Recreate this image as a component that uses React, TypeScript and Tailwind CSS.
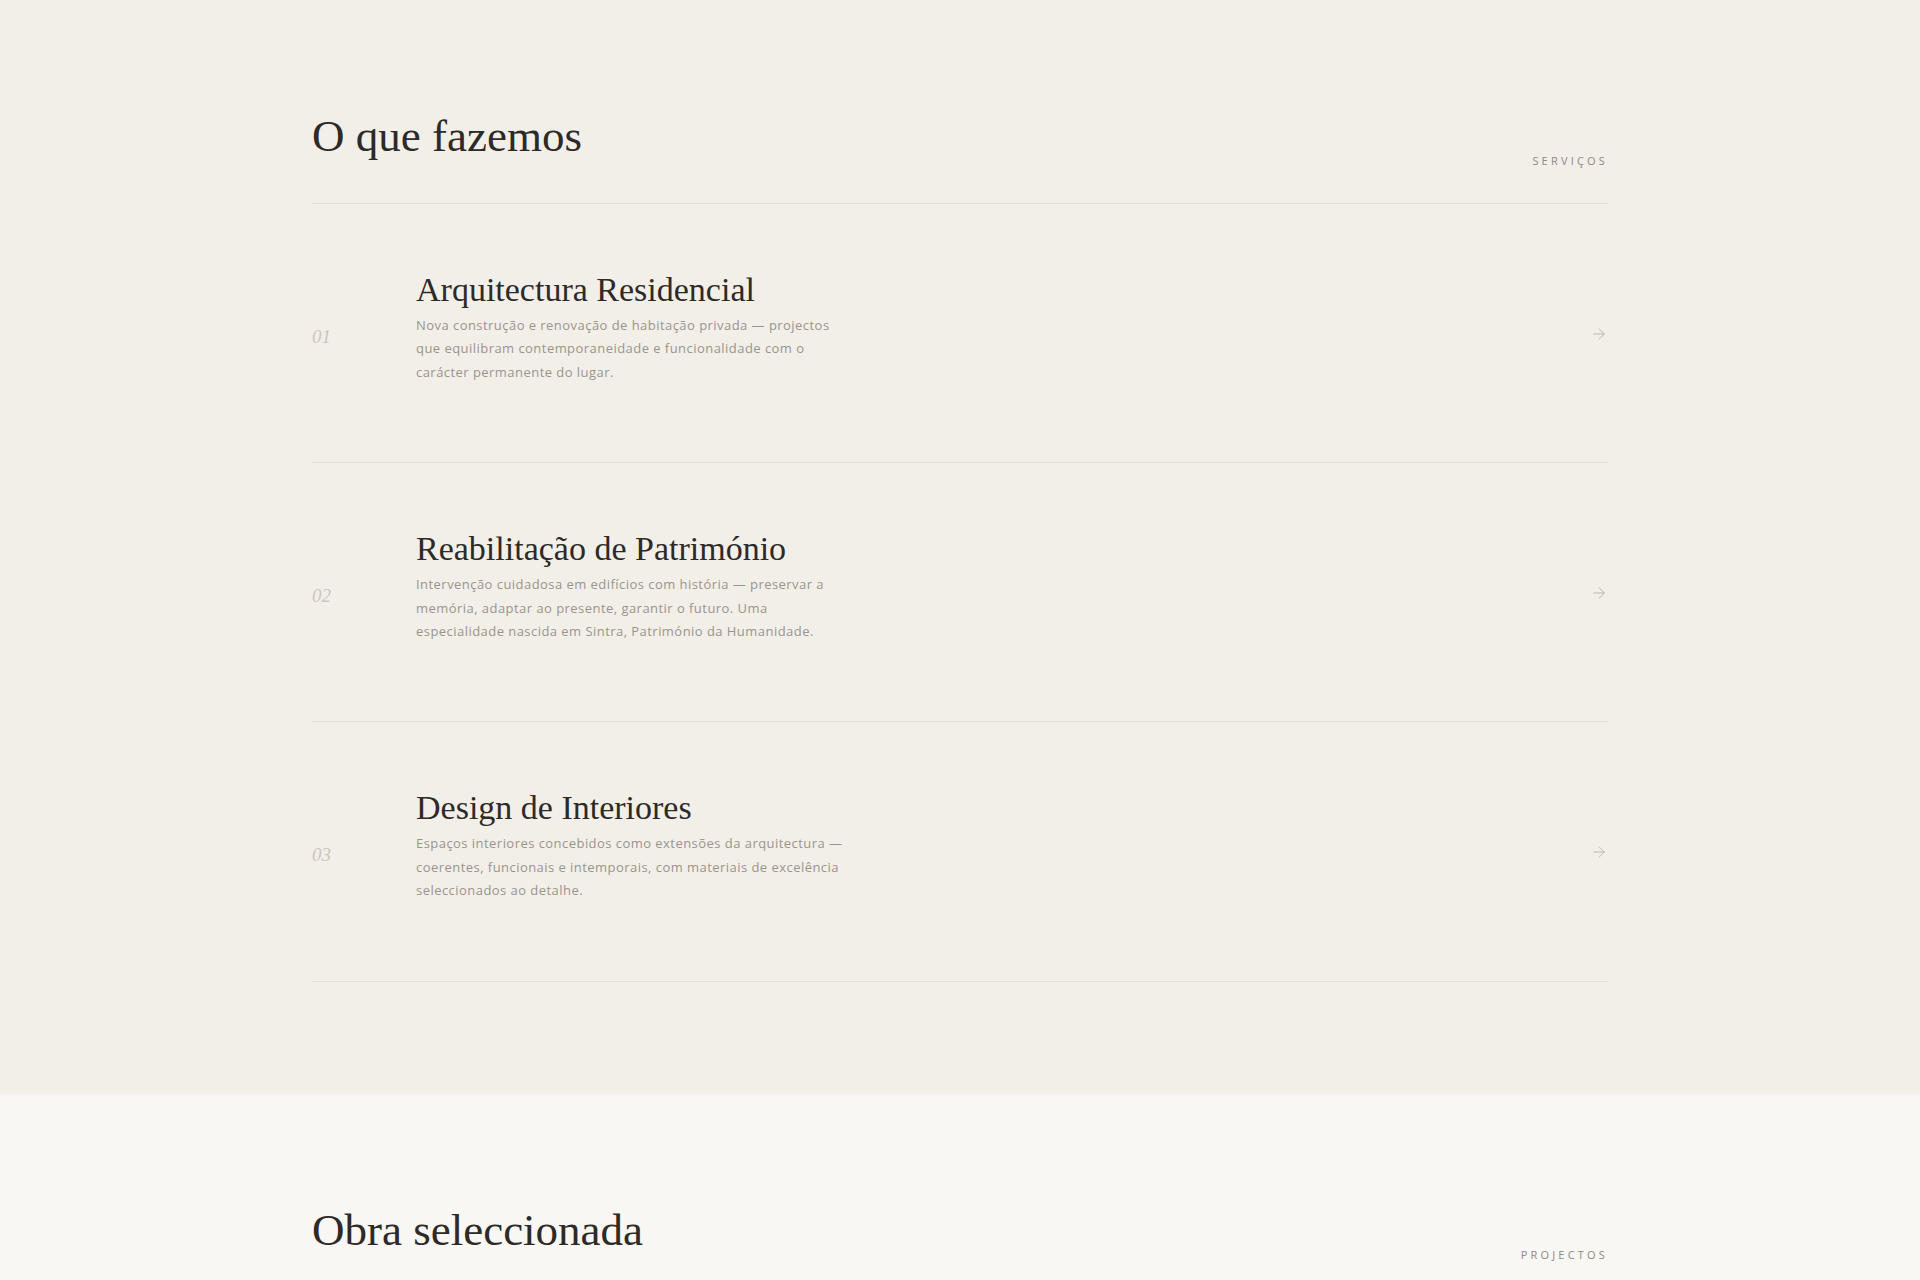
import { ArrowRight } from 'lucide-react';

type Service = {
  num: string;
  title: string;
  text: string;
};

const services: Service[] = [
  {
    num: '01',
    title: 'Arquitectura Residencial',
    text: 'Nova construção e renovação de habitação privada — projectos que equilibram contemporaneidade e funcionalidade com o carácter permanente do lugar.',
  },
  {
    num: '02',
    title: 'Reabilitação de Património',
    text: 'Intervenção cuidadosa em edifícios com história — preservar a memória, adaptar ao presente, garantir o futuro. Uma especialidade nascida em Sintra, Património da Humanidade.',
  },
  {
    num: '03',
    title: 'Design de Interiores',
    text: 'Espaços interiores concebidos como extensões da arquitectura — coerentes, funcionais e intemporais, com materiais de excelência seleccionados ao detalhe.',
  },
];

const serif = "font-['Liberation_Serif',serif]";
const sans = "font-['Open_Sans',sans-serif]";

function SectionHeader({ title, label }: { title: string; label: string }) {
  return (
    <div className="flex items-end justify-between border-b border-[#e3ded6] pb-[34px]">
      <h2 className={`${serif} text-[45px] leading-[65px] text-[#2d2a27]`}>{title}</h2>
      <span className={`${sans} pb-[1px] text-[11px] leading-[15px] tracking-[0.29em] text-[#8e8984] uppercase`}>
        {label}
      </span>
    </div>
  );
}

function ServiceRow({ num, title, text }: Service) {
  return (
    <li className="grid grid-cols-[104px_1fr_auto] items-center border-b border-[#e3ded6] pt-[61px] pb-[60px]">
      <span className={`${serif} pt-[7px] text-[19px] italic text-[#ccc6bd]`}>{num}</span>
      <div className="pt-1 pb-[18px]">
        <h3 className={`${serif} text-[34px] leading-[41px] text-[#2d2a27]`}>{title}</h3>
        <p className={`${sans} mt-1 max-w-[434px] text-[13px] leading-[23.4px] tracking-[0.035em] text-[#9a948c]`}>
          {text}
        </p>
      </div>
      <ArrowRight className="h-[18px] w-[18px] text-[#bdb7ae]" strokeWidth={1.3} />
    </li>
  );
}

export default function App() {
  return (
    <div className="min-h-screen bg-[#f9f7f3]">
      <section className="bg-[#f2efe9] pt-[104px] pb-28">
        <div className="mx-auto w-[1296px]">
          <SectionHeader title="O que fazemos" label="Serviços" />
          <ul>
            {services.map((s) => (
              <ServiceRow key={s.num} {...s} />
            ))}
          </ul>
        </div>
      </section>
      <section className="bg-[#f9f7f3] pt-[104px] pb-28">
        <div className="mx-auto w-[1296px]">
          <SectionHeader title="Obra seleccionada" label="Projectos" />
          <div className="h-[320px]" />
        </div>
      </section>
    </div>
  );
}
